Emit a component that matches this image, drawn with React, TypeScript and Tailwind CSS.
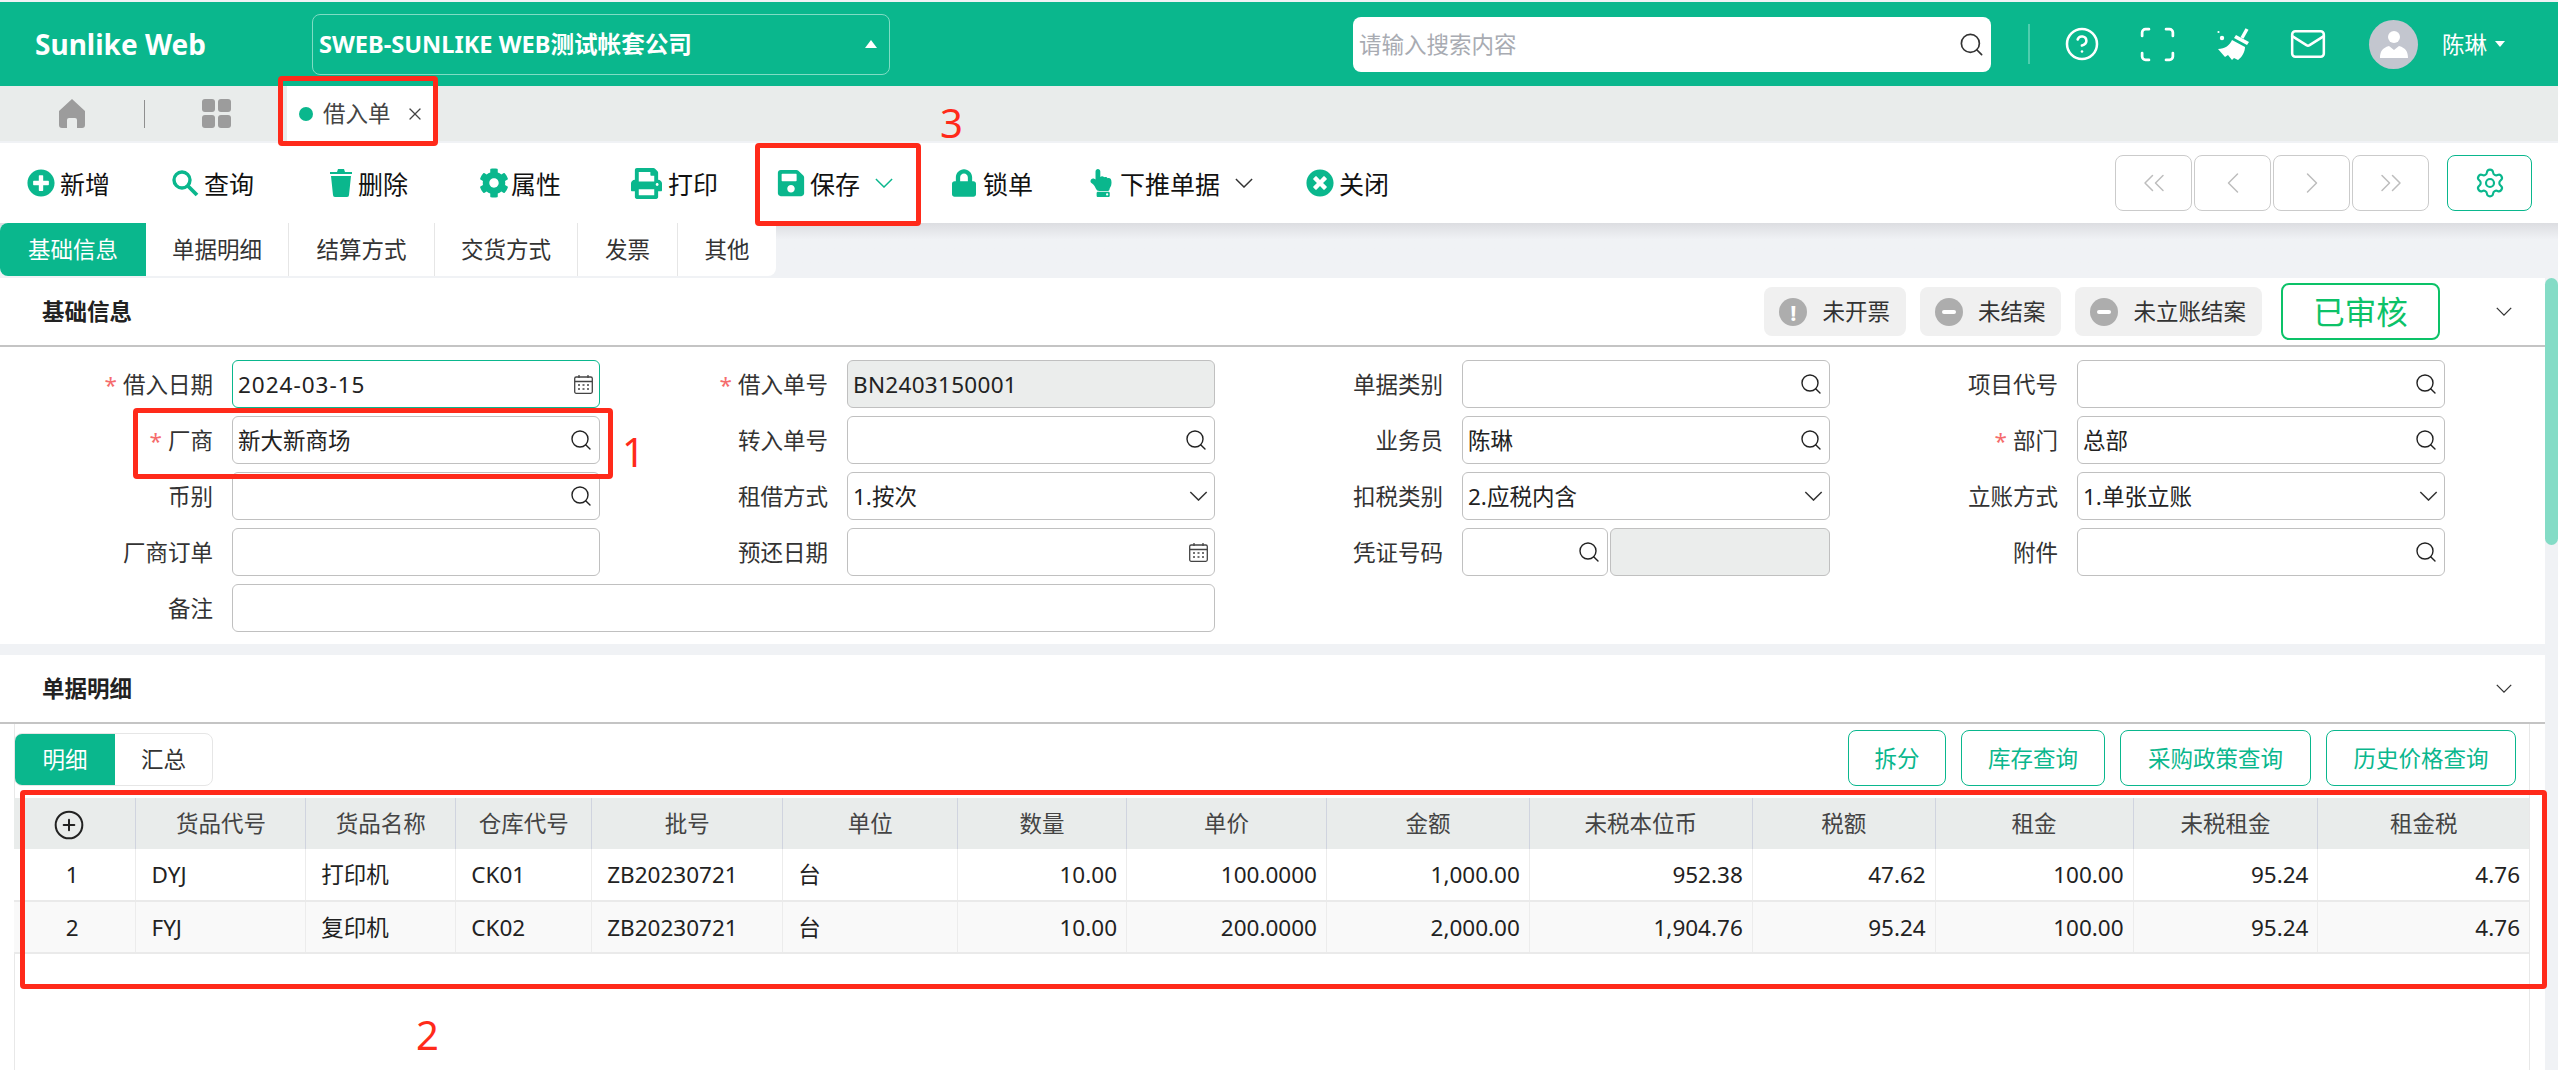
import type { ReactNode } from "react";
import {
  ChevronLeft,
  ChevronRight,
  ChevronsLeft,
  ChevronsRight,
  CircleHelp,
  CirclePlus,
  Mail,
  Scan,
  Search,
  Settings,
  X,
} from "lucide-react";
import {
  FaCog,
  FaHandPointUp,
  FaLock,
  FaPlusCircle,
  FaPrint,
  FaSave,
  FaTimesCircle,
} from "react-icons/fa";

type FieldKind = "search" | "date" | "select" | "plain" | "disabled";
type FieldDef = { label: string; value?: string; kind: FieldKind; required?: boolean; focused?: boolean };

const formRows: FieldDef[][] = [
  [
    { label: "借入日期", value: "2024-03-15", kind: "date", required: true, focused: true },
    { label: "借入单号", value: "BN2403150001", kind: "disabled", required: true },
    { label: "单据类别", kind: "search" },
    { label: "项目代号", kind: "search" },
  ],
  [
    { label: "厂商", value: "新大新商场", kind: "search", required: true },
    { label: "转入单号", kind: "search" },
    { label: "业务员", value: "陈琳", kind: "search" },
    { label: "部门", value: "总部", kind: "search", required: true },
  ],
  [
    { label: "币别", kind: "search" },
    { label: "租借方式", value: "1.按次", kind: "select" },
    { label: "扣税类别", value: "2.应税内含", kind: "select" },
    { label: "立账方式", value: "1.单张立账", kind: "select" },
  ],
];

const columns = [
  { title: "", width: 122 },
  { title: "货品代号", width: 170 },
  { title: "货品名称", width: 150 },
  { title: "仓库代号", width: 136 },
  { title: "批号", width: 191 },
  { title: "单位", width: 175 },
  { title: "数量", width: 169 },
  { title: "单价", width: 200 },
  { title: "金额", width: 203 },
  { title: "未税本位币", width: 223 },
  { title: "税额", width: 183 },
  { title: "租金", width: 198 },
  { title: "未税租金", width: 185 },
  { title: "租金税", width: 211 },
];

const tableRows = [
  ["1", "DYJ", "打印机", "CK01", "ZB20230721", "台", "10.00", "100.0000", "1,000.00", "952.38", "47.62", "100.00", "95.24", "4.76"],
  ["2", "FYJ", "复印机", "CK02", "ZB20230721", "台", "10.00", "200.0000", "2,000.00", "1,904.76", "95.24", "100.00", "95.24", "4.76"],
];

function Caret({ className }: { className: string }) {
  return (
    <svg viewBox="0 0 20 11" className={className} fill="none" stroke="currentColor" strokeWidth="1.6">
      <path d="M1 1l9 9 9-9" />
    </svg>
  );
}

function CalendarGlyph() {
  return (
    <svg viewBox="0 0 19 19" className="h-[19px] w-[19px] text-[#444]" fill="none" stroke="currentColor" strokeWidth="1.3">
      <rect x="0.7" y="2" width="17.6" height="16.3" rx="1.5" />
      <path d="M5 0v3M14 0v3M1 6.5h17" />
      <path d="M4 10h2M8.5 10h2M13 10h2M4 14h2M8.5 14h2M13 14h2" strokeWidth="1.6" />
    </svg>
  );
}

function BroomGlyph() {
  return (
    <svg viewBox="0 0 33 32" className="h-8 w-[33px]" fill="white">
      <path d="M25 10l5-9" stroke="white" strokeWidth="3.4" fill="none" />
      <path d="M19 7l13 7-2 3-13-7z" />
      <path d="M15 12l13 7c0 5-3 10-7 13l-4-2-2 2-4-5-3 2-7-8c7 0 12-4 14-9z" />
      <circle cx="5" cy="10" r="2.2" />
      <circle cx="1.5" cy="4" r="1.1" />
    </svg>
  );
}

function SearchGlyph() {
  return (
    <svg viewBox="0 0 28 28" className="h-7 w-7 text-[#0ab78d]" fill="none" stroke="currentColor">
      <circle cx="11" cy="11" r="8" strokeWidth="3.4" />
      <path d="M17 17l9 9" strokeWidth="3.8" />
    </svg>
  );
}

function TrashGlyph() {
  return (
    <svg viewBox="0 0 22 28" className="h-7 w-[22px] text-[#0ab78d]" fill="currentColor">
      <path d="M8 0h6l1 3h7v2H0V3h7z" />
      <path d="M1 7h20l-2 19a2 2 0 0 1-2 2H5a2 2 0 0 1-2-2z" />
    </svg>
  );
}

function ToolButton({
  icon,
  label,
  width,
  caret,
  box = "w-[30px]",
  gap = "ml-[4px]",
}: {
  icon: ReactNode;
  label: string;
  width: number;
  caret?: string;
  box?: string;
  gap?: string;
}) {
  return (
    <div className="flex shrink-0 items-center" style={{ width }}>
      <span className={`flex h-7 items-center justify-center text-[#0ab78d] ${box}`}>{icon}</span>
      <span className={`pt-[2px] text-[25px] text-[#111] ${gap}`}>{label}</span>
      {caret && <Caret className={`ml-[15px] h-[10px] w-[18px] ${caret}`} />}
    </div>
  );
}

function InputBox({ def, className }: { def: FieldDef; className: string }) {
  const border = def.focused ? "border-[#0ab78d]" : "border-[#c0c0c0]";
  const bg = def.kind === "disabled" ? "bg-[#ebedec]" : "bg-white";
  const spacing = def.kind === "date" ? "tracking-[1px]" : def.kind === "disabled" ? "tracking-[0.3px]" : "";
  return (
    <div className={`flex h-12 items-center rounded-md border-[1.5px] pr-[6px] pl-[5px] ${border} ${bg} ${className}`}>
      <span className={`flex-1 pt-[2px] text-[#222] ${spacing}`}>{def.value}</span>
      {def.kind === "search" && <Search className="h-[24px] w-[24px] text-[#222]" strokeWidth={1.4} />}
      {def.kind === "date" && <CalendarGlyph />}
      {def.kind === "select" && <Caret className="h-[10px] w-[19px] text-[#333]" />}
    </div>
  );
}

function Label({ text, required }: { text: string; required?: boolean }) {
  return (
    <div className="w-[213px] shrink-0 pt-[2px] text-right text-[#333]">
      {required && <span className="mr-[6px] text-[#f56c6c]">*</span>}
      {text}
    </div>
  );
}

function Field({ def }: { def: FieldDef }) {
  return (
    <div className="flex w-[615px] shrink-0 items-center">
      <Label text={def.label} required={def.required} />
      <InputBox def={def} className="ml-[19px] w-[368px]" />
    </div>
  );
}

function StatusChip({ icon, label }: { icon: ReactNode; label: string }) {
  return (
    <div className="flex h-[49px] items-center gap-[15px] rounded-lg bg-[#f0f0f0] pr-[16px] pl-[15px] text-[#333]">
      <span className="flex h-7 w-7 items-center justify-center rounded-full bg-[#adadad] text-[22px] leading-none font-bold text-white">
        {icon}
      </span>
      <span className="pt-[2px]">{label}</span>
    </div>
  );
}

function MinusBar() {
  return <span className="h-1 w-[14px] rounded-sm bg-white" />;
}

function SectionHead({ title, children }: { title: string; children?: ReactNode }) {
  return (
    <div className="flex h-[69px] items-center border-b-2 border-[#c4c4c4] pr-[33px] pl-[42px]">
      <span className="pt-[2px] font-bold text-[#222]">{title}</span>
      <div className="ml-auto flex items-center">{children}</div>
      <Caret className="ml-[56px] h-[9px] w-4 text-[#333]" />
    </div>
  );
}

function OutlineButton({ label, width }: { label: string; width: number }) {
  return (
    <div
      className="flex h-14 items-center justify-center rounded-lg border-[1.5px] border-[#0ab78d] pt-[2px] text-[#0ab78d]"
      style={{ width }}
    >
      {label}
    </div>
  );
}

function NavButton({ children }: { children: ReactNode }) {
  return (
    <div className="flex h-14 w-[77px] items-center justify-center rounded-lg border-[1.5px] border-[#cbcbcb] text-[#bdbdbd]">
      {children}
    </div>
  );
}

export default function App() {
  return (
    <div className="relative h-[1070px] w-[2558px] overflow-hidden bg-[#f0f2f5] font-['Noto_Sans','Noto_Sans_CJK_SC',sans-serif] text-[22.5px] leading-none">
      {/* top bar */}
      <header className="mt-[2px] flex h-[84px] items-center bg-[#0ab78d] pl-[35px] text-white">
        <div className="w-[277px] shrink-0 text-[28px] font-bold">Sunlike Web</div>
        <div className="flex h-[61px] w-[578px] shrink-0 items-center justify-between rounded-lg border border-[#7fdcc4] pr-3 pl-[6px] text-[23.6px] font-bold">
          <span className="pt-[2px]">SWEB-SUNLIKE WEB测试帐套公司</span>
          <span className="h-0 w-0 border-x-[6px] border-b-[8px] border-x-transparent border-b-white" />
        </div>
        <div className="ml-[463px] flex h-[55px] w-[638px] shrink-0 items-center justify-between rounded-lg bg-white pr-[6px] pl-[6px] text-[#a8abb2]">
          <span className="pt-[2px]">请输入搜索内容</span>
          <Search className="h-[27px] w-[27px] text-[#333]" strokeWidth={1.5} />
        </div>
        <div className="ml-[37px] h-10 w-[2px] bg-[#4fcdae]" />
        <CircleHelp className="ml-[34px] h-9 w-9" strokeWidth={1.7} />
        <Scan className="ml-[37px] h-[41px] w-[41px]" strokeWidth={1.6} />
        <span className="ml-[39px]">
          <BroomGlyph />
        </span>
        <Mail className="ml-[39px] h-[38px] w-[38px]" strokeWidth={1.6} />
        <div className="ml-[42px] flex h-[49px] w-[49px] items-center justify-center rounded-full bg-[#c3c6cf]">
          <svg viewBox="0 0 28 28" className="h-7 w-7" fill="white">
            <circle cx="14" cy="7" r="6" />
            <path d="M0 28c0-6 2-10 9-12l5 4 5-4c7 2 9 6 9 12z" />
          </svg>
        </div>
        <span className="ml-[24px] pt-[2px]">陈琳</span>
        <span className="ml-2 h-0 w-0 border-x-[5px] border-t-[6px] border-x-transparent border-t-white" />
      </header>

      {/* open tabs */}
      <div className="flex h-[55px] items-center bg-[#e9eceb] text-[#444]">
        <svg viewBox="0 0 26 29" className="ml-[59px] h-[29px] w-[26px]" fill="#9c9c9c">
          <path d="M13 0l13 12v14a3 3 0 0 1-3 3h-5v-8a2 2 0 0 0-2-2h-6a2 2 0 0 0-2 2v8H3a3 3 0 0 1-3-3V12z" />
        </svg>
        <div className="ml-[59px] h-7 w-px bg-[#8f8f8f]" />
        <div className="ml-[57px] grid h-[29px] w-[29px] grid-cols-2 gap-[3px]">
          <span className="rounded-[3px] bg-[#9c9c9c]" />
          <span className="rounded-[3px] bg-[#9c9c9c]" />
          <span className="rounded-[3px] bg-[#9c9c9c]" />
          <span className="rounded-[3px] bg-[#9c9c9c]" />
        </div>
        <div className="ml-[56px] flex h-full w-[146px] items-center bg-white pl-3">
          <span className="h-[14px] w-[14px] rounded-full bg-[#0ab78d]" />
          <span className="ml-[10px] pt-[2px]">借入单</span>
          <X className="ml-[14px] h-5 w-5 text-[#444]" strokeWidth={1.5} />
        </div>
      </div>

      {/* toolbar */}
      <div className="mt-[2px] flex h-[80px] items-center bg-white pr-[26px] pl-[26px]">
        <ToolButton width={144} label="新增" icon={<FaPlusCircle className="h-7 w-7" />} />
        <ToolButton width={158} label="查询" icon={<SearchGlyph />} />
        <ToolButton width={151} label="删除" box="w-[26px]" icon={<TrashGlyph />} />
        <ToolButton width={151} label="属性" gap="ml-[2px]" icon={<FaCog className="h-[30px] w-[30px]" />} />
        <ToolButton width={146} label="打印" box="w-[33px]" gap="ml-[5px]" icon={<FaPrint className="h-[31px] w-[31px]" />} />
        <ToolButton width={176} label="保存" caret="text-[#0ab78d]" icon={<FaSave className="h-[30px] w-[30px]" />} />
        <ToolButton width={136} label="锁单" box="w-[24px]" gap="ml-[7px]" icon={<FaLock className="h-7 w-6" />} />
        <ToolButton width={217} label="下推单据" box="w-[26px]" gap="ml-[6px]" caret="text-[#333]" icon={<FaHandPointUp className="h-7 w-6" />} />
        <ToolButton width={120} label="关闭" icon={<FaTimesCircle className="h-7 w-7" />} />
        <div className="ml-auto flex items-center gap-[2px]">
          <NavButton><ChevronsLeft className="h-9 w-9" strokeWidth={1} /></NavButton>
          <NavButton><ChevronLeft className="h-9 w-9" strokeWidth={1} /></NavButton>
          <NavButton><ChevronRight className="h-9 w-9" strokeWidth={1} /></NavButton>
          <NavButton><ChevronsRight className="h-9 w-9" strokeWidth={1} /></NavButton>
          <div className="ml-[16px] flex h-14 w-[85px] items-center justify-center rounded-lg border-[1.5px] border-[#0ab78d] text-[#0ab78d]">
            <Settings className="h-[32px] w-[32px]" strokeWidth={1.6} />
          </div>
        </div>
      </div>

      {/* section tabs */}
      <div className="h-[55px] bg-gradient-to-b from-[#dcdde1] to-[#f0f2f5] to-30%">
        <div className="flex h-[53px] w-[776px] items-stretch overflow-hidden rounded-l-lg rounded-br-lg bg-white pt-0 text-[#333]">
          <div className="flex w-[146px] items-center justify-center bg-[#0ab78d] pt-[2px] text-white">基础信息</div>
          <div className="flex w-[143px] items-center justify-center border-r border-[#e6e6e6] pt-[2px]">单据明细</div>
          <div className="flex w-[146px] items-center justify-center border-r border-[#e6e6e6] pt-[2px]">结算方式</div>
          <div className="flex w-[143px] items-center justify-center border-r border-[#e6e6e6] pt-[2px]">交货方式</div>
          <div className="flex w-[100px] items-center justify-center border-r border-[#e6e6e6] pt-[2px]">发票</div>
          <div className="flex w-[98px] items-center justify-center pt-[2px]">其他</div>
        </div>
      </div>

      {/* 基础信息 */}
      <section className="h-[366px] w-[2545px] bg-white">
        <SectionHead title="基础信息">
          <div className="flex items-center gap-[14px]">
            <StatusChip icon="!" label="未开票" />
            <StatusChip icon={<MinusBar />} label="未结案" />
            <StatusChip icon={<MinusBar />} label="未立账结案" />
            <div className="ml-[5px] flex h-[57px] w-[159px] items-center justify-center rounded-lg border-[2.5px] border-[#0cc268] text-[31.5px] text-[#0cc268]">
              已审核
            </div>
          </div>
        </SectionHead>
        <div className="flex flex-col gap-2 pt-[13px]">
          {formRows.map((row) => (
            <div key={row[0].label} className="flex">
              {row.map((def) => (
                <Field key={def.label} def={def} />
              ))}
            </div>
          ))}
          <div className="flex">
            <Field def={{ label: "厂商订单", kind: "plain" }} />
            <Field def={{ label: "预还日期", kind: "date" }} />
            <div className="flex w-[615px] shrink-0 items-center">
              <Label text="凭证号码" />
              <InputBox def={{ label: "", kind: "search" }} className="ml-[19px] w-[146px]" />
              <InputBox def={{ label: "", kind: "disabled" }} className="ml-[2px] w-[220px]" />
            </div>
            <Field def={{ label: "附件", kind: "search" }} />
          </div>
          <div className="flex items-center">
            <Label text="备注" />
            <InputBox def={{ label: "备注", kind: "plain" }} className="ml-[19px] w-[983px]" />
          </div>
        </div>
      </section>

      {/* 单据明细 */}
      <section className="mt-[11px] h-[415px] w-[2545px] bg-white">
        <SectionHead title="单据明细" />
        <div className="mx-[14px] h-[346px] w-[2516px] border-x border-[#e8e8e8]">
          <div className="-ml-px flex h-[74px] items-start justify-between">
            <div className="mt-[9px] flex h-[53px] w-[199px] overflow-hidden rounded-lg border border-[#e6e6e6] text-[#333]">
              <div className="flex w-[100px] items-center justify-center bg-[#0ab78d] pt-[2px] text-white">明细</div>
              <div className="flex flex-1 items-center justify-center pt-[2px]">汇总</div>
            </div>
            <div className="mt-[6px] flex gap-[15px] pr-[13px]">
              <OutlineButton label="拆分" width={98} />
              <OutlineButton label="库存查询" width={144} />
              <OutlineButton label="采购政策查询" width={191} />
              <OutlineButton label="历史价格查询" width={190} />
            </div>
          </div>
          <table className="-ml-px table-fixed border-collapse text-[#222]">
            <colgroup>
              {columns.map((c, i) => (
                <col key={i} style={{ width: c.width }} />
              ))}
            </colgroup>
            <thead>
              <tr className="h-[51px] bg-[#e9eceb] text-[#444]">
                {columns.map((c, i) => (
                  <th key={i} className="border-r-[1.5px] border-[#d0d4df] pt-[2px] text-center font-normal last:border-r-0">
                    {i === 0 ? <CirclePlus className="ml-[39px] h-8 w-8 text-[#222]" strokeWidth={1.5} /> : c.title}
                  </th>
                ))}
              </tr>
            </thead>
            <tbody>
              {tableRows.map((row, r) => (
                <tr key={row[0]} className={`h-[52px] border-b-2 border-[#eaeaea] ${r === 1 ? "bg-[#f9f9f9]" : "bg-white"}`}>
                  {row.map((cell, i) => (
                    <td
                      key={i}
                      className={`border-r-[1.5px] border-[#ececec] px-[9px] pt-[2px] last:border-r-0 ${
                        i === 0 ? "pr-[14px] text-center" : i >= 6 ? "text-right" : "pl-[15px] text-left"
                      }`}
                    >
                      {cell}
                    </td>
                  ))}
                </tr>
              ))}
            </tbody>
          </table>
        </div>
      </section>

      {/* page scrollbar */}
      <div className="absolute top-[278px] right-0 h-[267px] w-[13px] rounded-full bg-[#84dcc6]" />

      {/* red annotations over the screenshot */}
      <div className="absolute top-[76px] left-[278px] h-[70px] w-[160px] rounded border-[5px] border-[#ff2a1a]" />
      <div className="absolute top-[143px] left-[755px] h-[83px] w-[166px] rounded border-[5px] border-[#ff2a1a]" />
      <div className="absolute top-[408px] left-[133px] h-[71px] w-[480px] rounded border-[5px] border-[#ff2a1a]" />
      <div className="absolute top-[790px] left-[20px] h-[199px] w-[2527px] rounded border-[5px] border-[#ff2a1a]" />
      <span className="absolute top-[102px] left-[940px] text-[40px] leading-[42px] text-[#ff2a1a]">3</span>
      <span className="absolute top-[431px] left-[622px] text-[40px] leading-[42px] text-[#ff2a1a]">1</span>
      <span className="absolute top-[1014px] left-[416px] text-[40px] leading-[42px] text-[#ff2a1a]">2</span>
    </div>
  );
}
